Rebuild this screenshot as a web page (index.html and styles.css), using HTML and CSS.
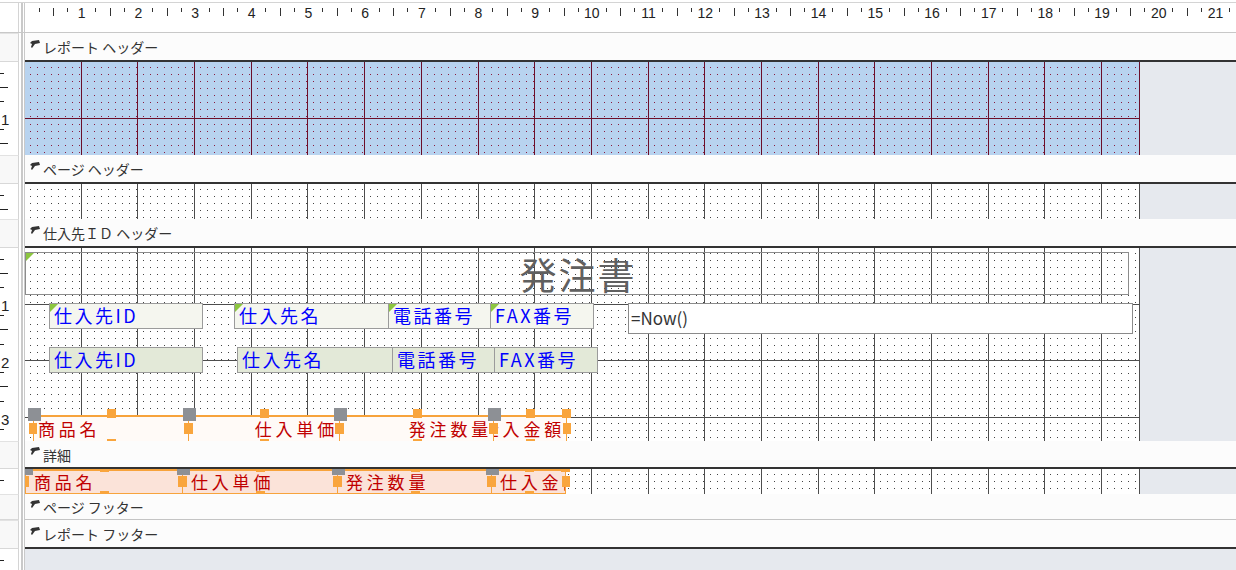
FILE: index.html
```html
<!DOCTYPE html>
<html lang="ja">
<head>
    <meta charset="UTF-8">
    <meta name="viewport" content="width=device-width, initial-scale=1.0">
    <title>発注書 - デザイン ビュー</title>
    <link rel="stylesheet" href="styles.css">
</head>
<body>
<div class="design">
    <!-- horizontal ruler -->
    <div class="row top">
        <div class="vr corner"></div>
        <div class="sep"></div>
        <div class="hruler">
            <span class="h0"></span>
            <span class="hn">1</span><span class="hn">2</span><span class="hn">3</span><span class="hn">4</span>
            <span class="hn">5</span><span class="hn">6</span><span class="hn">7</span><span class="hn">8</span>
            <span class="hn">9</span><span class="hn">10</span><span class="hn">11</span><span class="hn">12</span>
            <span class="hn">13</span><span class="hn">14</span><span class="hn">15</span><span class="hn">16</span>
            <span class="hn">17</span><span class="hn">18</span><span class="hn">19</span><span class="hn">20</span>
            <span class="hn">21</span><span class="hn">22</span>
        </div>
    </div>

    <!-- report header -->
    <div class="row">
        <div class="vr box"></div>
        <div class="sep"></div>
        <div class="bar"><svg class="mark" viewBox="0 0 10 9"><path d="M2 1 L9 0 L10 3 L5 4 L2 8 L1 7 L2 4 L0 3 Z"/></svg>レポート ヘッダー</div>
    </div>
    <div class="row">
        <div class="vr"><div class="ticks"><i class="v0"></i><i class="vn">1</i><i class="vn"></i></div></div>
        <div class="sep"></div>
        <div class="area">
            <div class="sec rh blue"><div class="grid" data-rows="2"></div></div>
        </div>
    </div>

    <!-- page header -->
    <div class="row">
        <div class="vr box"></div>
        <div class="sep"></div>
        <div class="bar"><svg class="mark" viewBox="0 0 10 9"><path d="M2 1 L9 0 L10 3 L5 4 L2 8 L1 7 L2 4 L0 3 Z"/></svg>ページ ヘッダー</div>
    </div>
    <div class="row">
        <div class="vr"><div class="ticks"><i class="v0"></i></div></div>
        <div class="sep"></div>
        <div class="area">
            <div class="sec ph plain"><div class="grid" data-rows="1"></div></div>
        </div>
    </div>

    <!-- group header -->
    <div class="row">
        <div class="vr box"></div>
        <div class="sep"></div>
        <div class="bar"><svg class="mark" viewBox="0 0 10 9"><path d="M2 1 L9 0 L10 3 L5 4 L2 8 L1 7 L2 4 L0 3 Z"/></svg>仕入先ＩＤ ヘッダー</div>
    </div>
    <div class="row">
        <div class="vr"><div class="ticks"><i class="v0"></i><i class="vn">1</i><i class="vn">2</i><i class="vn">3</i></div></div>
        <div class="sep"></div>
        <div class="area">
            <div class="sec gh plain">
                <div class="grid" data-rows="4"></div>

                <div class="title err">発注書</div>

                <div class="line r1">
                    <div class="ctl lbl err w154">仕入先ID</div>
                    <div class="ctl lbl err w155 gap31">仕入先名</div>
                    <div class="ctl lbl err w103 join">電話番号</div>
                    <div class="ctl lbl err w104 join">FAX番号</div>
                    <div class="ctl now">=Now()</div>
                </div>

                <div class="line r2">
                    <div class="ctl txt w154">仕入先ID</div>
                    <div class="ctl txt w156 gap34">仕入先名</div>
                    <div class="ctl txt w103 join">電話番号</div>
                    <div class="ctl txt w104 join">FAX番号</div>
                </div>

                <div class="line r3">
                    <div class="sel cap w156">
                        <span class="t">商品名</span>
                        <b class="mv"></b><b class="h tm"></b><b class="h tr"></b><b class="h lm"></b><b class="h rm"></b><b class="h bm"></b>
                    </div>
                    <div class="sel cap right w152 join">
                        <span class="t">仕入単価</span>
                        <b class="mv"></b><b class="h tm"></b><b class="h tr"></b><b class="h lm"></b><b class="h rm"></b><b class="h bm"></b>
                    </div>
                    <div class="sel cap right w155 join">
                        <span class="t">発注数量</span>
                        <b class="mv"></b><b class="h tm"></b><b class="h tr"></b><b class="h lm"></b><b class="h rm"></b><b class="h bm"></b>
                    </div>
                    <div class="sel cap right w74 join">
                        <span class="t">仕入金額</span>
                        <b class="mv"></b><b class="h tm"></b><b class="h tr"></b><b class="h lm"></b><b class="h rm"></b><b class="h bm"></b>
                    </div>
                </div>
            </div>
        </div>
    </div>

    <!-- detail -->
    <div class="row">
        <div class="vr box"></div>
        <div class="sep"></div>
        <div class="bar bar-d"><svg class="mark" viewBox="0 0 10 9"><path d="M2 1 L9 0 L10 3 L5 4 L2 8 L1 7 L2 4 L0 3 Z"/></svg>詳細</div>
    </div>
    <div class="row">
        <div class="vr"><div class="ticks"><i class="v0"></i></div></div>
        <div class="sep"></div>
        <div class="area">
            <div class="sec dt plain">
                <div class="grid" data-rows="1"></div>
                <div class="line r4">
                    <div class="sel field w158">
                        <span class="t">商品名</span>
                        <b class="mv"></b><b class="h tm"></b><b class="h tr"></b><b class="h lm"></b><b class="h rm"></b><b class="h bm"></b>
                    </div>
                    <div class="sel field w156 join">
                        <span class="t">仕入単価</span>
                        <b class="mv"></b><b class="h tm"></b><b class="h tr"></b><b class="h lm"></b><b class="h rm"></b><b class="h bm"></b>
                    </div>
                    <div class="sel field w155 join">
                        <span class="t">発注数量</span>
                        <b class="mv"></b><b class="h tm"></b><b class="h tr"></b><b class="h lm"></b><b class="h rm"></b><b class="h bm"></b>
                    </div>
                    <div class="sel field w75 join">
                        <span class="t">仕入金額</span>
                        <b class="mv"></b><b class="h tm"></b><b class="h tr"></b><b class="h lm"></b><b class="h rm"></b><b class="h bm"></b>
                    </div>
                </div>
            </div>
        </div>
    </div>

    <!-- page footer -->
    <div class="row">
        <div class="vr box"></div>
        <div class="sep"></div>
        <div class="bar bar-pf"><svg class="mark" viewBox="0 0 10 9"><path d="M2 1 L9 0 L10 3 L5 4 L2 8 L1 7 L2 4 L0 3 Z"/></svg>ページ フッター</div>
    </div>

    <!-- report footer -->
    <div class="row">
        <div class="vr box"></div>
        <div class="sep"></div>
        <div class="bar"><svg class="mark" viewBox="0 0 10 9"><path d="M2 1 L9 0 L10 3 L5 4 L2 8 L1 7 L2 4 L0 3 Z"/></svg>レポート フッター</div>
    </div>

    <div class="row rest">
        <div class="vr"><div class="ticks"><i class="v0"></i></div></div>
        <div class="sep"></div>
        <div class="area"></div>
    </div>
</div>

<script src="script.js"></script>
</body>
</html>
```

FILE: styles.css
```css
* {
    box-sizing: border-box;
}
body {
    margin: 0;
    width: 1236px;
    height: 570px;
    overflow: hidden;
    background: #fff;
    font-family: "Noto Sans CJK JP", sans-serif;
    color: #333;
}
.design {
    display: flex;
    flex-direction: column;
    height: 570px;
}
.row {
    display: flex;
    flex: none;
}
.rest {
    flex: 1;
}

/* rulers */
.top {
    height: 31px;
    margin-top: 2px;
    border-top: 1px solid #d4d4d4;
    border-bottom: 1px solid #c8c8c8;
}
.vr {
    width: 19px;
    flex: none;
    overflow: hidden;
    border-right: 1px solid #d4d4d4;
    background: #fff;
}
.box {
    background: #f8f8f8;
    border-top: 1px solid #e2e2e2;
    border-bottom: 1px solid #d8d8d8;
}
.sep {
    width: 6px;
    flex: none;
    background: linear-gradient(to right, #fff 2px, #c9c9c9 2px 4px, #fff 4px 5px, #c9c9c9 5px);
}
.hruler {
    flex: 1;
    display: flex;
    overflow: hidden;
    font-family: "Liberation Sans", sans-serif;
    font-size: 14px;
    color: #222;
}
.h0 {
    width: 0.75cm;
    flex: none;
    background: linear-gradient(#333, #333) 14px 5px / 1px 4px no-repeat;
}
.hn {
    width: 1.5cm;
    flex: none;
    text-align: center;
    line-height: 20px;
    background:
        linear-gradient(#333, #333) 0 5px / 1px 8px no-repeat,
        linear-gradient(#333, #333) 14px 5px / 1px 4px no-repeat,
        linear-gradient(#333, #333) 42px 5px / 1px 4px no-repeat;
}
.ticks {
    height: 0;
    font-family: "Liberation Sans", sans-serif;
    font-size: 15px;
    color: #222;
}
.ticks i {
    display: block;
    font-style: normal;
}
.ticks .v0 {
    height: 0.75cm;
    background:
        linear-gradient(#222, #222) 0 11px / 4px 1px no-repeat,
        linear-gradient(#222, #222) 0 25px / 8px 1px no-repeat;
}
.ticks .vn {
    height: 1.5cm;
    display: flex;
    align-items: center;
    padding: 2px 0 0 1px;
    background:
        linear-gradient(#222, #222) 0 11px / 4px 1px no-repeat,
        linear-gradient(#222, #222) 0 39px / 4px 1px no-repeat,
        linear-gradient(#222, #222) 0 53px / 8px 1px no-repeat;
}

/* section bars */
.bar {
    flex: 1;
    height: 29px;
    display: flex;
    align-items: center;
    gap: 3px;
    padding: 1px 0 0 5px;
    background: #fcfcfc;
    border-bottom: 2px solid #333;
    font-size: 14px;
    color: #333;
}
.bar-d {
    height: 28px;
}
.bar-pf {
    height: 26px;
    border-bottom: 1px solid #c4c4c4;
}
.mark {
    width: 10px;
    height: 9px;
    fill: #333;
    margin-top: -6px;
}

/* section bodies */
.area {
    flex: 1;
    background: #e6e9ee;
}
.sec {
    position: relative;
    width: 1115px;
    overflow: hidden;
    border-right: 1px solid var(--line);
}
.rh { height: 93px; }
.ph { height: 35px; }
.gh { height: 193px; }
.dt { height: 25px; }

.blue {
    --bg: #b8d3ef;
    --dot: #8a1a3c;
    --line: #6b0f2a;
}
.plain {
    --bg: #fff;
    --dot: #444;
    --line: #4d4d4d;
}
.grid {
    display: grid;
    grid-template-columns: repeat(20, 1.5cm);
    grid-auto-rows: 1.5cm;
}
.grid i {
    border-right: 1px solid var(--line);
    border-bottom: 1px solid var(--line);
    background-color: var(--dot);
    background-image:
        linear-gradient(to right, var(--bg) 6px, transparent 6px),
        linear-gradient(var(--bg) 6px, transparent 6px);
    background-size: 7px 7px;
    background-position: -1px -1px;
}

/* controls */
.err::before {
    content: "";
    position: absolute;
    left: 0;
    top: 0;
    border-top: 8px solid #8cc63f;
    border-right: 8px solid transparent;
}
.title {
    position: absolute;
    left: 0;
    top: 4px;
    width: 1104px;
    height: 43px;
    border: 1px solid #8c8c8c;
    display: flex;
    align-items: center;
    justify-content: center;
    padding-left: 2px;
    font-size: 37px;
    letter-spacing: 2px;
    color: #606060;
}
.line {
    position: absolute;
    display: flex;
}
.r1 { left: 24px; top: 55px; }
.r2 { left: 24px; top: 99px; }
.r3 { left: 8px; top: 167px; }
.r4 { left: 0; top: 0; }

.ctl {
    position: relative;
    height: 26px;
    border: 1px solid #9b9b9b;
    padding-left: 4px;
    font-size: 18px;
    line-height: 23px;
    letter-spacing: 2.5px;
    color: #0000ff;
    white-space: nowrap;
    overflow: hidden;
}
.lbl {
    background: #f5f6ef;
}
.txt {
    background: #e3e9d8;
}
.now {
    width: 505px;
    height: 31px;
    margin-left: 34px;
    padding-left: 2px;
    background: #fff;
    border-color: #8a8a8a;
    font-size: 17px;
    line-height: 27px;
    letter-spacing: 0;
    color: #333;
}
.join { margin-left: -1px; }
.gap31 { margin-left: 31px; }
.gap34 { margin-left: 34px; }
.w74 { width: 74px; }
.w75 { width: 75px; }
.w103 { width: 103px; }
.w104 { width: 104px; }
.w152 { width: 152px; }
.w154 { width: 154px; }
.w155 { width: 155px; }
.w156 { width: 156px; }
.w158 { width: 158px; }

/* selected controls */
.sel {
    position: relative;
    border: 1px solid #f7a33c;
    border-top-width: 2px;
    font-size: 17px;
    letter-spacing: 3.8px;
    color: #c00000;
}
.sel .t {
    display: flex;
    height: 100%;
    overflow: hidden;
    white-space: nowrap;
}
.cap {
    height: 27px;
    line-height: 24px;
    background: #fffaf7;
}
.cap .t {
    padding-left: 4px;
}
.right .t {
    justify-content: flex-end;
    padding: 0 1px 0 0;
}
.field {
    height: 25px;
    line-height: 22px;
    background: #fbe3d9;
}
.field .t {
    padding-left: 8px;
}
.sel b {
    position: absolute;
    z-index: 1;
    background: #f9a53d;
}
.sel .mv {
    left: -6px;
    top: -9px;
    width: 13px;
    height: 13px;
    background: #8d9095;
    z-index: 2;
}
.h { width: 9px; height: 9px; }
.tm { left: calc(50% - 4px); top: -8px; }
.tr { right: -5px; top: -8px; }
.bm { left: calc(50% - 4px); bottom: -7px; }
.lm { left: -5px; top: calc(50% - 6px); width: 8px; height: 11px; }
.rm { right: -5px; top: calc(50% - 6px); width: 8px; height: 11px; }
```

FILE: script.js
```js
// fill each section body with its 1cm grid cells
document.querySelectorAll('.grid').forEach(function (grid) {
    var cells = Number(grid.dataset.rows) * 20;
    for (var i = 0; i < cells; i++) {
        grid.appendChild(document.createElement('i'));
    }
});
```
